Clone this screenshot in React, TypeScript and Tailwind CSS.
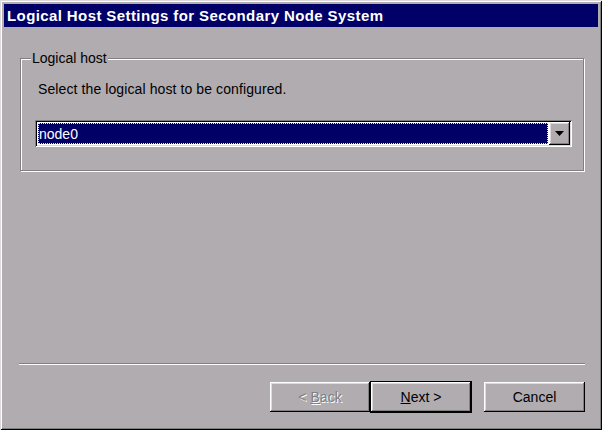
import React from 'react';

const raised =
  'shadow-[inset_-1px_-1px_0_#000,inset_1px_1px_0_#fff,inset_-2px_-2px_0_#808080,inset_2px_2px_0_#dcd8dc]';

export default function App() {
  return (
    <div className="w-[602px] h-[430px] bg-[#b0acb0] p-[4px] flex flex-col font-['Liberation_Sans',Arial,sans-serif] text-black shadow-[inset_1px_1px_0_#dcd8dc,inset_-1px_-1px_0_#000,inset_2px_2px_0_#fff,inset_-2px_-2px_0_#808080]">
      {/* Title bar */}
      <div className="h-[23px] bg-[#000066] text-white font-bold text-[15px] leading-[17px] pl-[3px] flex items-center tracking-[0.4px]">
        Logical Host Settings for Secondary Node System
      </div>

      {/* Group box */}
      <div className="relative mt-[31px] ml-[16px] w-[564px] h-[113px] border border-[#808080] shadow-[inset_1px_1px_0_#fff,1px_1px_0_#fff]">
        <span className="absolute -top-[9px] left-[10px] px-[1px] bg-[#b0acb0] text-[14px] leading-[16px]">
          Logical host
        </span>
        <div className="pl-[17px] pt-[22px] text-[14px] leading-[16px] tracking-[0.1px]">
          Select the logical host to be configured.
        </div>
        <div className="ml-[14px] mt-[23px] w-[537px] h-[27px] p-[2px] flex bg-white shadow-[inset_1px_1px_0_#808080,inset_-1px_-1px_0_#fff,inset_2px_2px_0_#000,inset_-2px_-2px_0_#dcd8dc]">
          <div className="flex-1 m-[1px] bg-[#000066] border border-dotted border-[#f0f0a0] text-white text-[14px] leading-[16px] flex items-center">
            node0
          </div>
          <div className={`w-[21px] h-full bg-[#b0acb0] flex items-center justify-center ${raised}`}>
            <svg width="9" height="5" viewBox="0 0 9 5">
              <path d="M0 0h9L4.5 5z" fill="#000" />
            </svg>
          </div>
        </div>
      </div>

      {/* Separator */}
      <div className="mt-[192px] ml-[15px] w-[566px] h-[2px] border-t border-[#808080] border-b border-b-white" />

      {/* Buttons */}
      <div className="mt-[16px] ml-[266px] flex text-[14px] leading-[16px]">
        <div className={`w-[100px] h-[30px] mt-[1px] flex items-center justify-center text-[#808080] [text-shadow:1px_1px_0_#fff] ${raised}`}>
          &lt; <span className="underline ml-[4px]">B</span>ack
        </div>
        <div className="w-[102px] h-[32px] border border-black">
          <div className={`w-full h-full flex items-center justify-center ${raised}`}>
            <span className="underline">N</span>ext &gt;
          </div>
        </div>
        <div className={`ml-[12px] mt-[1px] w-[101px] h-[30px] flex items-center justify-center ${raised}`}>
          Cancel
        </div>
      </div>
    </div>
  );
}
